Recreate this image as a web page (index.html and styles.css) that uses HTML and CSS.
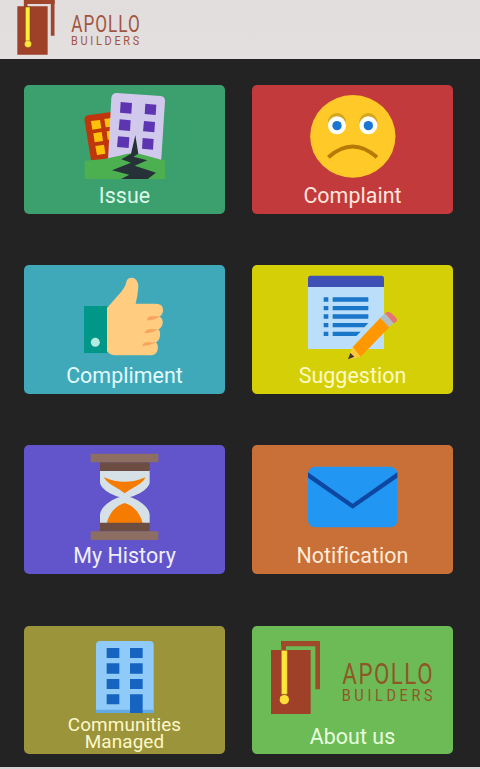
FILE: index.html
```
<!DOCTYPE html>
<html lang="en">
<head>
<meta charset="utf-8">
<title>Apollo Builders</title>
<link rel="stylesheet" href="styles.css">
</head>
<body>
<header class="header">
  <svg class="logo" viewBox="0 0 480 177">
    <path d="M77 22V5H158V107" fill="none" stroke="#9e452b" stroke-width="11"/>
    <path d="M75 0H164V12H75z" fill="#9e452b"/>
    <path d="M52 19H143V164H52z" fill="#9e4128"/>
    <path d="M76 21H90V124H76z" fill="#ffec35" stroke="#67401f" stroke-width="1.5"/>
    <circle cx="84" cy="132" r="10.5" fill="#ffe83a" stroke="#67401f" stroke-width="1"/>
    <text class="brand brand-name" x="214" y="95" font-size="69" textLength="208" lengthAdjust="spacingAndGlyphs">APOLLO</text>
    <text class="brand brand-sub" x="213" y="134" font-size="36" textLength="213" lengthAdjust="spacingAndGlyphs">BUILDERS</text>
  </svg>
</header>
<main class="grid">
  <a class="card issue">
    <svg class="icon" viewBox="12 15 603 300">
      <path d="M203 106L280 95V240H213L194 123Q191 109 203 106z" fill="#bf360c"/>
      <path d="M213 123L240 120 244 145 217 149zM253 117L275 114V140L257 142zM220 160L245 156 249 183 224 187zM260 154L275 152V177L263 179zM226 198L252 194 256 221 231 225z" fill="#ffc107"/>
      <path d="M290 39L422 48Q436 50 435 64L423 250 264 240 274 54Q276 39 290 39z" fill="#d1c9ec"/>
      <path d="M302 66L336 69 334 101 300 98zM376 71L409 74 407 105 374 102zM299 118L332 121 330 153 296 150zM372 123L405 126 403 157 369 154zM294 169L328 172 326 204 291 201zM368 174L401 177 399 209 366 206z" fill="#5e35b1"/>
      <path d="M194 242C245 240 270 234 304 226Q339 213 375 226L435 242V297H194z" fill="#4caf50"/>
      <path d="M346 166L355 221 340 230 382 241 344 257 408 278 383 297H303L328 284 276 271 333 248 304 238 333 221z" fill="#263238"/>
    </svg>
    <span class="label">Issue</span>
  </a>
  <a class="card complaint">
    <svg class="icon" viewBox="12 15 603 300">
      <ellipse cx="314.500" cy="169" rx="128" ry="124" fill="#ffca28"/>
      <circle cx="267" cy="126" r="27" fill="#d5a51f"/>
      <circle cx="361" cy="126" r="27" fill="#d5a51f"/>
      <circle cx="267" cy="136" r="27" fill="#fff"/>
      <circle cx="361" cy="136" r="27" fill="#fff"/>
      <circle cx="267" cy="137" r="14" fill="#1976d2"/>
      <circle cx="361" cy="137" r="14" fill="#1976d2"/>
      <path d="M241 232Q314 167 387 232" fill="none" stroke="#b97a05" stroke-width="12"/>
    </svg>
    <span class="label">Complaint</span>
  </a>
  <a class="card compliment">
    <svg class="icon" viewBox="12 15 603 300">
      <path d="M192 138H262V279H192z" fill="#009688"/>
      <circle cx="226" cy="247" r="13.500" fill="#b2ebdf"/>
      <path d="M261 144L305 94Q318 78 321 60Q327 51 341 54Q356 61 355 82Q353 108 347 131H407Q429 131 429 150Q429 163 419 170Q430 177 428 190Q426 204 415 208Q422 215 420 228Q418 242 408 247Q416 256 413 269Q409 286 391 286H286Q271 286 261 274z" fill="#ffcc80"/>
      <path d="M419 169H391Q382 171 381 181Q399 182 419 170zM415 208H388Q377 209 374 220Q395 220 415 208zM408 247H378Q368 249 367 259Q388 258 408 247z" fill="#f6a45e"/>
    </svg>
    <span class="label">Compliment</span>
  </a>
  <a class="card suggestion">
    <svg class="icon" viewBox="12 15 603 300">
      <path d="M180 78H408V267H180z" fill="#bbdefb"/>
      <path d="M180 81V55Q180 47 188 47H400Q408 47 408 55V81z" fill="#3f51b5"/>
      <path d="M227 112H241V125H227zM254 112H361V125H254zM227 138H241V151H227zM254 138H361V151H254zM227 163H241V176H227zM254 163H361V176H254zM227 189H241V202H227zM254 189H361L349 202H254zM227 215H241V228H227zM254 215H338L325 228H254z" fill="#1976c8"/>
      <path d="M314 261L397 173 424 202 338 290z" fill="#ff9800"/>
      <path d="M314 261L338 290 310 297 300 298 304 285z" fill="#ffc93c"/>
      <path d="M307 279L319 290 300 298z" fill="#37372f"/>
      <path d="M397 173L411 160 437 188 424 202z" fill="#b0bec5"/>
      <path d="M411 160L417 156Q424 154 430 160L445 174Q450 180 445 185L437 190z" fill="#e57373"/>
    </svg>
    <span class="label">Suggestion</span>
  </a>
  <a class="card history">
    <svg class="icon" viewBox="12 15 603 300">
      <path d="M240 91H389V126C389 145 355 166 329 171C355 178 389 201 389 226V250H240V226C240 201 274 178 300 171C274 166 240 145 240 126z" fill="#d5e1e7"/>
      <path d="M252 112Q314 139 376 112Q373 125 350 137Q330 148 314 160Q299 148 279 137Q257 125 252 112zM314 189Q355 202 368 249H260Q273 202 314 189z" fill="#f57c00"/>
      <path d="M240 67H389V93H240zM240 248H389V274H240z" fill="#6d4c41"/>
      <path d="M212 41H415V67H212zM212 274H415V300H212z" fill="#8d6e63"/>
    </svg>
    <span class="label">My History</span>
  </a>
  <a class="card notification">
    <svg class="icon" viewBox="12 15 603 300">
      <rect x="180" y="80" width="268" height="182" rx="21" fill="#2196f3"/>
      <path d="M180 97L314 191 448 97V113L314 206 180 113z" fill="#0d47a1"/>
    </svg>
    <span class="label">Notification</span>
  </a>
  <a class="card communities">
    <svg class="icon" viewBox="12 15 603 270">
      <path d="M228 276V72Q228 60 240 60H389Q401 60 401 72V276z" fill="#90caf9"/>
      <path d="M228 266H401V276H228z" fill="#64a9df"/>
      <path d="M260 81H298V111H260zM330 81H368V111H330zM260 127H298V158H260zM330 127H368V158H330zM260 174H298V204H260zM330 174H368V204H330zM260 220H298V250H260zM330 220H368V276H330z" fill="#1565c0"/>
    </svg>
    <span class="label small">Communities<br>Managed</span>
  </a>
  <a class="card about">
    <svg class="icon" viewBox="12 15 603 300">
      <path d="M107 90V68H209V205" fill="none" stroke="#9e4a2b" stroke-width="14"/>
      <path d="M99 60H216V76H99z" fill="#9e4a2b"/>
      <path d="M69 87H188V279H69z" fill="#9e4128"/>
      <path d="M100 88H118V220H100z" fill="#ffe63d" stroke="#87652c" stroke-width="1.500"/>
      <circle cx="109" cy="236" r="14" fill="#ffdf37"/>
      <text class="brand brand-name" x="283" y="188" font-size="89" textLength="275" lengthAdjust="spacingAndGlyphs">APOLLO</text>
      <text class="brand brand-sub" x="281" y="239" font-size="47" textLength="284" lengthAdjust="spacingAndGlyphs">BUILDERS</text>
    </svg>
    <span class="label">About us</span>
  </a>
</main>
</body>
</html>
```
FILE: styles.css
```
* { box-sizing: border-box; }
html { background: #232323; }
body {
  margin: 0;
  height: 769px;
  overflow: hidden;
  display: flex;
  flex-direction: column;
  background: #232323;
  border-bottom: 2px solid #d6d3d5;
  font-family: Roboto, "Liberation Sans", sans-serif;
}
.header {
  flex: none;
  height: 59px;
  background: linear-gradient(#e0dddc, #e4e0e0);
}
.logo { display: block; width: 160px; height: 59px; }
.brand { fill: #a2553f; font-family: Roboto, sans-serif; font-weight: 400; }
.brand-name { letter-spacing: 4px; }
.brand-sub { letter-spacing: 9px; }
.about .brand { fill: #8d5726; }
.about .brand-name { letter-spacing: 6px; }
.about .brand-sub { letter-spacing: 12px; }
.grid {
  display: grid;
  grid-template-columns: 201px 201px;
  grid-auto-rows: 128.800px;
  gap: 51.500px 27px;
  padding: 25.800px 24px 0;
}
.card {
  display: flex;
  flex-direction: column;
  align-items: center;
  border-radius: 5px;
}
.icon { display: block; flex: none; width: 201px; }
.label {
  font-size: 21.400px;
  line-height: 22px;
  letter-spacing: 0.050px;
  color: #f7f3ec;
  text-align: center;
  white-space: nowrap;
}
.small { font-size: 18.900px; line-height: 17px; letter-spacing: 0.100px; }
.issue { background: #3ca06e; }
.issue .label { color: #dcfbe9; }
.complaint { background: #c23a3b; }
.complaint .label { color: #ffe6dd; }
.compliment { background: #40a9b9; }
.compliment .label { color: #e2fbff; }
.suggestion { background: #d5cf08; }
.suggestion .label { color: #fdfbc4; }
.history { background: #6255cb; }
.history .label { color: #f0efff; }
.notification { background: #c96f38; }
.notification .label { color: #ffebd9; }
.communities { background: #9c943a; }
.communities .label { color: #fcf8cb; }
.about { background: #6dbb57; }
.about .label { color: #e7ffdf; }
```
